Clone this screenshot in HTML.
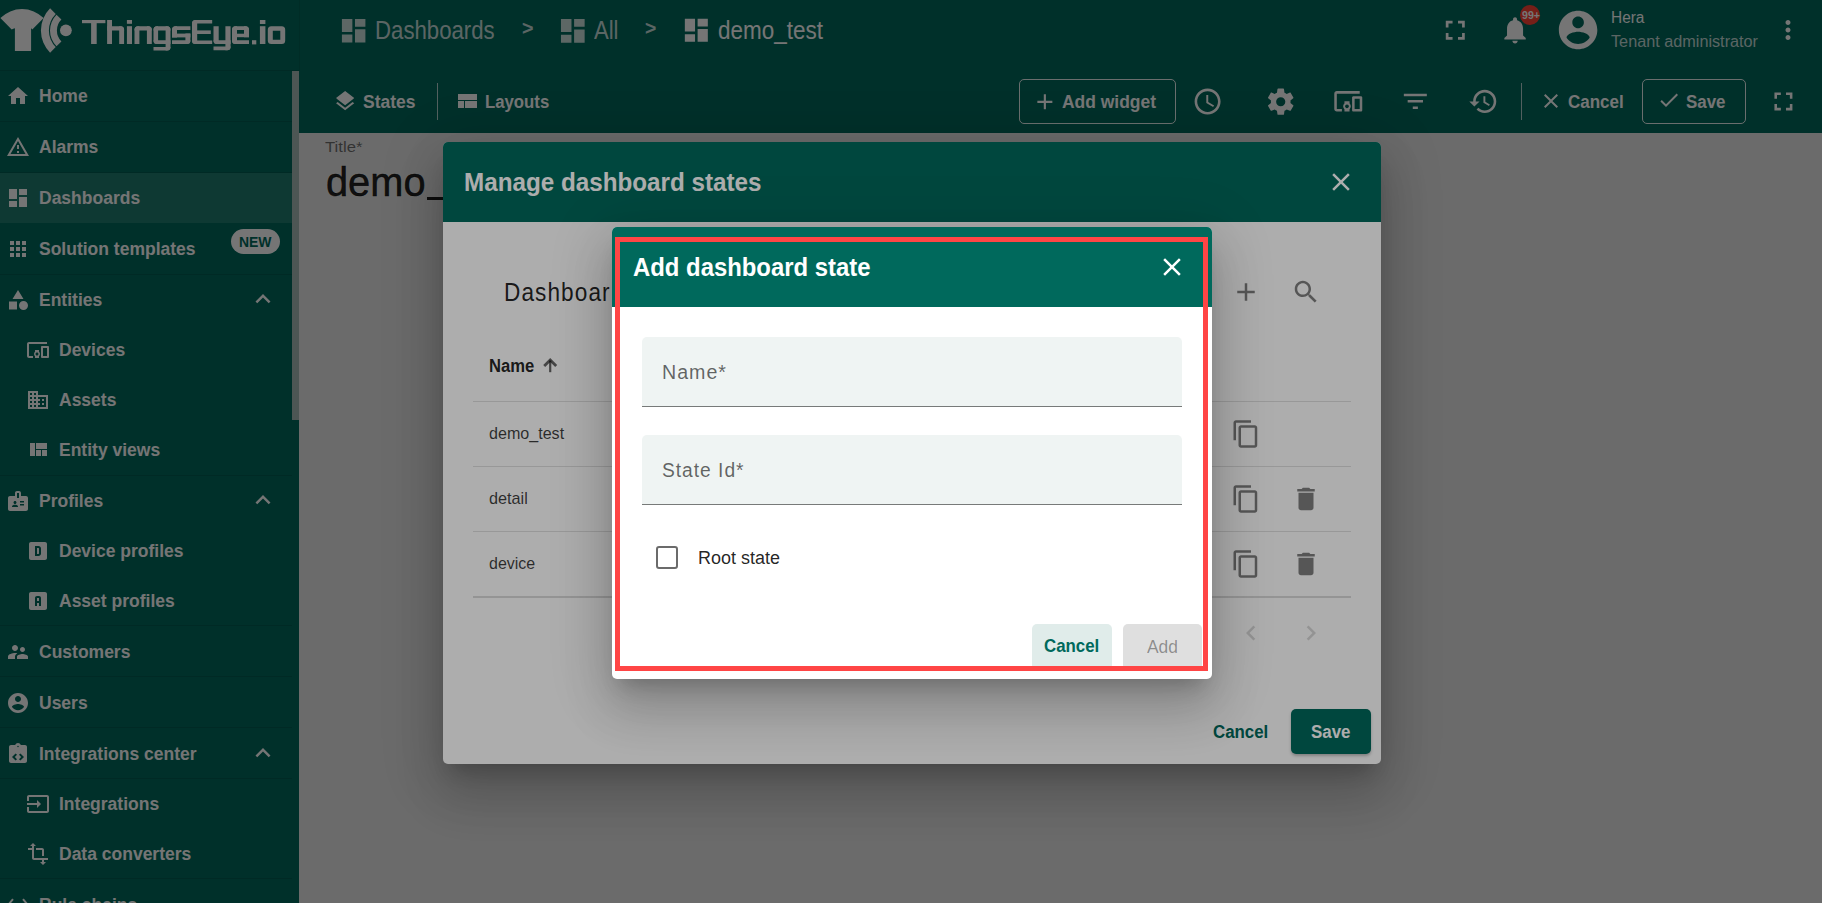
<!DOCTYPE html>
<html><head><meta charset="utf-8"><style>
html,body{margin:0;padding:0}
body{width:1822px;height:903px;overflow:hidden;position:relative;font-family:"Liberation Sans",sans-serif;background:#fafafa}
.layer{position:absolute;left:0;top:0;width:1822px;height:903px;overflow:hidden}
.t{position:absolute;white-space:nowrap;line-height:1.1172;transform-origin:0 0}
.i{position:absolute;overflow:visible}
.r{position:absolute;box-sizing:content-box}
</style></head><body>
<div class="layer" style="z-index:1">
<div class="r" style="left:0px;top:0px;width:1822px;height:133px;background:#00695c"></div>
<div class="r" style="left:0px;top:71px;width:299px;height:832px;background:#00695c"></div>
<div class="r" style="left:0px;top:70px;width:299px;height:1px;background:rgba(0,0,0,0.10)"></div>
<div class="r" style="left:299px;top:0px;width:1px;height:71px;background:rgba(0,0,0,0.08)"></div>
<div class="r" style="left:299px;top:133px;width:1523px;height:770px;background:#e9e9e9"></div>
<svg class="i" style="left:0px;top:0px;width:300px;height:71px" viewBox="0 0 300 71"><g fill="#fff">
<path d="M0.36 18.06A30.6 30.6 0 0 1 43.64 18.06L32.32 29.38A14.6 14.6 0 0 0 31.1 28.28L31.1 50.9L14.9 50.9L14.9 28.28A14.6 14.6 0 0 0 11.68 29.38Z"/>
<path d="M50.1 8.3A31.4 31.4 0 0 0 50.1 52.7L55.75 47.05A23.4 23.4 0 0 1 55.75 13.95Z"/>
<path d="M56.53 14.73A22.3 22.3 0 0 0 56.53 46.27L61.41 41.39A15.4 15.4 0 0 1 61.41 19.61Z"/>
<circle cx="65.9" cy="30.3" r="5.9"/>
<path d="M82.00 20.00H105.40V23.20H82.00V20.00Z"/><path d="M91.10 20.00H96.70V44.00H91.10V20.00Z"/><path d="M107.10 20.00H112.00V44.00H107.10V20.00Z"/><path d="M107.10 26.20H120.60A3.5 3.5 0 0 1 124.10 29.70V30.40H107.10V26.20Z"/><path d="M119.20 26.20H120.60A3.5 3.5 0 0 1 124.10 29.70V44.00H119.20V26.20Z"/><path d="M126.90 20.00H132.00V23.80H126.90V20.00Z"/><path d="M126.90 26.20H132.00V44.00H126.90V26.20Z"/><path d="M138.00 26.20H148.30A3.5 3.5 0 0 1 151.80 29.70V30.40H134.50V29.70A3.5 3.5 0 0 1 138.00 26.20Z"/><path d="M138.00 26.20H139.40V44.00H134.50V29.70A3.5 3.5 0 0 1 138.00 26.20Z"/><path d="M146.90 26.20H148.30A3.5 3.5 0 0 1 151.80 29.70V44.00H146.90V26.20Z"/><path d="M157.00 26.20H167.00A3.5 3.5 0 0 1 170.50 29.70V30.40H153.50V29.70A3.5 3.5 0 0 1 157.00 26.20Z"/><path d="M157.00 26.20H158.10V44.00H157.00A3.5 3.5 0 0 1 153.50 40.50V29.70A3.5 3.5 0 0 1 157.00 26.20Z"/><path d="M165.60 26.20H167.00A3.5 3.5 0 0 1 170.50 29.70V47.10A3.5 3.5 0 0 1 167.00 50.60H165.60V26.20Z"/><path d="M153.50 40.20H170.50V44.00H157.00A3.5 3.5 0 0 1 153.50 40.50V40.20Z"/><path d="M153.50 47.00H170.50V47.10A3.5 3.5 0 0 1 167.00 50.60H153.50V47.00Z"/><path d="M175.50 26.20H190.40V30.00H172.00V29.70A3.5 3.5 0 0 1 175.50 26.20Z"/><path d="M175.50 26.20H177.00V37.40H172.00V29.70A3.5 3.5 0 0 1 175.50 26.20Z"/><path d="M172.00 33.60H190.40V37.40H172.00V33.60Z"/><path d="M185.40 33.60H190.40V40.50A3.5 3.5 0 0 1 186.90 44.00H185.40V33.60Z"/><path d="M172.00 40.20H190.40V40.50A3.5 3.5 0 0 1 186.90 44.00H172.00V40.20Z"/><path d="M195.50 20.00H197.20V44.00H195.50A3.5 3.5 0 0 1 192.00 40.50V23.50A3.5 3.5 0 0 1 195.50 20.00Z"/><path d="M195.50 20.00H212.20V23.60H192.00V23.50A3.5 3.5 0 0 1 195.50 20.00Z"/><path d="M192.00 30.40H210.80V34.00H192.00V30.40Z"/><path d="M192.00 40.40H212.20V44.00H195.50A3.5 3.5 0 0 1 192.00 40.50V40.40Z"/><path d="M213.50 26.20H218.70V44.00H217.00A3.5 3.5 0 0 1 213.50 40.50V26.20Z"/><path d="M213.50 40.20H230.60V44.00H217.00A3.5 3.5 0 0 1 213.50 40.50V40.20Z"/><path d="M225.40 26.20H230.60V46.70A3.5 3.5 0 0 1 227.10 50.20H225.40V26.20Z"/><path d="M213.50 46.60H230.60V46.70A3.5 3.5 0 0 1 227.10 50.20H213.50V46.60Z"/><path d="M235.50 26.20H245.50A3.5 3.5 0 0 1 249.00 29.70V30.00H232.00V29.70A3.5 3.5 0 0 1 235.50 26.20Z"/><path d="M235.50 26.20H237.00V44.00H235.50A3.5 3.5 0 0 1 232.00 40.50V29.70A3.5 3.5 0 0 1 235.50 26.20Z"/><path d="M244.00 26.20H245.50A3.5 3.5 0 0 1 249.00 29.70V37.20H244.00V26.20Z"/><path d="M232.00 33.70H249.00V37.20H232.00V33.70Z"/><path d="M232.00 40.20H249.00V44.00H235.50A3.5 3.5 0 0 1 232.00 40.50V40.20Z"/><path d="M252.00 40.20H256.30V44.40H252.00V40.20Z"/><path d="M259.90 20.00H265.40V24.00H259.90V20.00Z"/><path d="M259.90 26.20H265.40V44.00H259.90V26.20Z"/><path fill-rule="evenodd" d="M271.30 26.20H281.70A3.5 3.5 0 0 1 285.20 29.70V40.50A3.5 3.5 0 0 1 281.70 44.00H271.30A3.5 3.5 0 0 1 267.80 40.50V29.70A3.5 3.5 0 0 1 271.30 26.20ZM272.8 30.8V39.7H280.3V30.8Z"/></g></svg>
<svg class="i" style="left:337.58px;top:14.78px;width:31.333333333333332px;height:31.333333333333332px;" viewBox="0 0 24 24"><path fill="rgba(255,255,255,0.80)" d="M3 13h8V3H3v10zm0 8h8v-6H3v6zm10 0h8V11h-8v10zm0-18v6h8V3h-8z"/></svg>
<div class="t" style="left:375.30px;top:17.38px;font-size:25px;color:rgba(255,255,255,0.80);transform:scaleX(0.8879);">Dashboards</div>
<div class="t" style="left:521.50px;top:17.40px;font-size:20px;color:rgba(255,255,255,0.80);font-weight:bold;transform:scaleX(0.9846);">&gt;</div>
<svg class="i" style="left:557.05px;top:14.75px;width:31.599999999999998px;height:31.599999999999998px;" viewBox="0 0 24 24"><path fill="rgba(255,255,255,0.80)" d="M3 13h8V3H3v10zm0 8h8v-6H3v6zm10 0h8V11h-8v10zm0-18v6h8V3h-8z"/></svg>
<div class="t" style="left:593.50px;top:17.38px;font-size:25px;color:rgba(255,255,255,0.80);transform:scaleX(0.8818);">All</div>
<div class="t" style="left:645.20px;top:17.40px;font-size:20px;color:rgba(255,255,255,0.80);font-weight:bold;transform:scaleX(0.9675);">&gt;</div>
<svg class="i" style="left:681.17px;top:15.07px;width:30.666666666666668px;height:30.666666666666668px;" viewBox="0 0 24 24"><path fill="#ffffff" d="M3 13h8V3H3v10zm0 8h8v-6H3v6zm10 0h8V11h-8v10zm0-18v6h8V3h-8z"/></svg>
<div class="t" style="left:718.00px;top:17.17px;font-size:25px;color:#ffffff;transform:scaleX(0.8994);">demo_test</div>
<svg class="i" style="left:1439.21px;top:14.21px;width:32.57142857142857px;height:32.57142857142857px;" viewBox="0 0 24 24"><path fill="#ffffff" d="M7 14H5v5h5v-2H7v-3zm-2-4h2V7h3V5H5v5zm12 7h-3v2h5v-5h-2v3zM14 5v2h3v3h2V5h-5z"/></svg>
<svg class="i" style="left:1499.25px;top:14.26px;width:32.099999999999994px;height:32.099999999999994px;" viewBox="0 0 24 24"><path fill="#ffffff" d="M12 22c1.1 0 2-.9 2-2h-4c0 1.1.89 2 2 2zm6-6v-5c0-3.07-1.64-5.64-4.5-6.32V4c0-.83-.67-1.5-1.5-1.5s-1.5.67-1.5 1.5v.68C7.63 5.36 6 7.92 6 11v5l-2 2v1h16v-1l-2-2z"/></svg>
<div class="r" style="left:1520px;top:5px;width:20px;height:20px;border-radius:50%;background:#ff4436"></div>
<div class="t" style="left:1521.50px;top:8.74px;font-size:11px;color:#ffffff;font-weight:bold;transform:scaleX(0.9647);">99+</div>
<svg class="i" style="left:1555.15px;top:7.15px;width:46.2px;height:46.2px;" viewBox="0 0 24 24"><path fill="#ffffff" d="M12 2C6.48 2 2 6.48 2 12s4.48 10 10 10 10-4.48 10-10S17.52 2 12 2zm0 3c1.66 0 3 1.34 3 3s-1.34 3-3 3-3-1.34-3-3 1.34-3 3-3zm0 14.2c-2.5 0-4.71-1.28-6-3.22.03-1.99 4-3.08 6-3.08 1.99 0 5.970 1.09 6 3.08-1.29 1.94-3.5 3.22-6 3.22z"/></svg>
<div class="t" style="left:1610.60px;top:8.52px;font-size:16px;color:#ffffff;transform:scaleX(0.9631);">Hera</div>
<div class="t" style="left:1610.50px;top:32.52px;font-size:16px;color:rgba(255,255,255,0.78);transform:scaleX(1.0140);">Tenant administrator</div>
<svg class="i" style="left:1772.50px;top:15.00px;width:30px;height:30px;" viewBox="0 0 24 24"><path fill="#ffffff" d="M12 8c1.1 0 2-.9 2-2s-.9-2-2-2-2 .9-2 2 .9 2 2 2zm0 2c-1.1 0-2 .9-2 2s.9 2 2 2 2-.9 2-2-.9-2-2-2zm0 6c-1.1 0-2 .9-2 2s.9 2 2 2 2-.9 2-2-.9-2-2-2z"/></svg>
<svg class="i" style="left:332.77px;top:88.78px;width:24.266666666666666px;height:24.266666666666666px;" viewBox="0 0 24 24"><path fill="#ffffff" d="M11.99 18.54l-7.37-5.73L3 14.07l9 7 9-7-1.63-1.27-7.38 5.74zM12 16l7.36-5.73L21 9l-9-7-9 7 1.63 1.27L12 16z"/></svg>
<div class="t" style="left:362.50px;top:92.66px;font-size:17.5px;color:#ffffff;font-weight:bold;transform:scaleX(0.9995);">States</div>
<div class="r" style="left:437px;top:83px;width:1px;height:37px;background:rgba(255,255,255,0.7)"></div>
<svg class="i" style="left:455.00px;top:88.50px;width:24px;height:24px;" viewBox="0 0 24 24"><path fill="#ffffff" d="M3 19h6v-7H3v7zm7 0h12v-7H10v7zM3 5v6h19V5H3z"/></svg>
<div class="t" style="left:484.60px;top:92.66px;font-size:17.5px;color:#ffffff;font-weight:bold;transform:scaleX(0.9568);">Layouts</div>
<div class="r" style="left:1019px;top:79px;width:155px;height:43px;border:1px solid rgba(255,255,255,0.9);border-radius:5px"></div>
<svg class="i" style="left:1031.64px;top:88.64px;width:25.714285714285715px;height:25.714285714285715px;" viewBox="0 0 24 24"><path fill="#ffffff" d="M19 13h-6v6h-2v-6H5v-2h6V5h2v6h6v2z"/></svg>
<div class="t" style="left:1062.00px;top:92.66px;font-size:17.5px;color:#ffffff;font-weight:bold;transform:scaleX(0.9969);">Add widget</div>
<svg class="i" style="left:1192.00px;top:85.90px;width:31.2px;height:31.2px;" viewBox="0 0 24 24"><path fill="#ffffff" d="M11.99 2C6.47 2 2 6.48 2 12s4.47 10 9.99 10C17.52 22 22 17.52 22 12S17.52 2 11.99 2zM12 20c-4.42 0-8-3.58-8-8s3.58-8 8-8 8 3.58 8 8-3.58 8-8 8zm.5-13H11v6l5.25 3.15.75-1.23-4.5-2.67z"/></svg>
<svg class="i" style="left:1264.83px;top:85.58px;width:31.449126413155188px;height:31.449126413155188px;" viewBox="0 0 24 24"><path fill="#ffffff" d="M12 15.5A3.5 3.5 0 0 1 8.5 12 3.5 3.5 0 0 1 12 8.5a3.5 3.5 0 0 1 3.5 3.5 3.5 3.5 0 0 1-3.5 3.5m7.43-2.53c.04-.32.07-.64.07-.97 0-.33-.03-.66-.07-1l2.11-1.63c.19-.15.24-.42.12-.64l-2-3.46c-.12-.22-.39-.31-.61-.22l-2.49 1c-.52-.39-1.06-.73-1.69-.98l-.37-2.65A.506.506 0 0 0 14 2h-4c-.25 0-.46.18-.5.42l-.37 2.65c-.63.25-1.17.59-1.69.98l-2.49-1c-.22-.09-.49 0-.61.22l-2 3.46c-.13.22-.07.49.12.64L4.57 11c-.04.34-.07.67-.07 1 0 .33.03.65.07.97l-2.11 1.66c-.19.15-.25.42-.12.64l2 3.46c.12.22.39.3.61.22l2.49-1.01c.52.4 1.06.74 1.69.99l.37 2.65c.04.24.25.42.5.42h4c.25 0 .46-.18.5-.42l.37-2.65c.63-.26 1.17-.59 1.69-.99l2.49 1.01c.22.08.49 0 .61-.22l2-3.46c.12-.22.07-.49-.12-.64l-2.11-1.66z"/></svg>
<svg class="i" style="left:1332.73px;top:86.21px;width:30.545454545454547px;height:30.545454545454547px;" viewBox="0 0 24 24"><path fill="#ffffff" d="M3 6h18V4H3c-1.1 0-2 .9-2 2v12c0 1.1.9 2 2 2h4v-2H3V6zm10 6H9v1.78c-.61.55-1 1.33-1 2.22s.39 1.67 1 2.22V20h4v-1.78c.61-.55 1-1.34 1-2.22s-.39-1.67-1-2.22V12zm-2 5.5c-.83 0-1.5-.67-1.5-1.5s.67-1.5 1.5-1.5 1.5.67 1.5 1.5-.67 1.5-1.5 1.5zM22 8h-6c-.5 0-1 .5-1 1v10c0 .5.5 1 1 1h6c.5 0 1-.5 1-1V9c0-.5-.5-1-1-1zm-1 10h-4v-8h4v8z"/></svg>
<svg class="i" style="left:1400.17px;top:85.63px;width:30.666666666666668px;height:30.666666666666668px;" viewBox="0 0 24 24"><path fill="#ffffff" d="M10 18h4v-2h-4v2zM3 6v2h18V6H3zm3 7h12v-2H6v2z"/></svg>
<svg class="i" style="left:1467.71px;top:85.74px;width:30.857142857142858px;height:30.857142857142858px;" viewBox="0 0 24 24"><path fill="#ffffff" d="M13 3c-4.97 0-9 4.03-9 9H1l3.89 3.89.07.14L9 12H6c0-3.87 3.13-7 7-7s7 3.13 7 7-3.13 7-7 7c-1.93 0-3.68-.79-4.94-2.06l-1.42 1.42C8.27 19.99 10.51 21 13 21c4.97 0 9-4.03 9-9s-4.03-9-9-9zm-1 5v5l4.28 2.54.72-1.21-3.5-2.08V8H12z"/></svg>
<div class="r" style="left:1521px;top:83px;width:1px;height:37px;background:rgba(255,255,255,0.7)"></div>
<svg class="i" style="left:1538.60px;top:89.00px;width:24px;height:24px;" viewBox="0 0 24 24"><path fill="#ffffff" d="M19 6.41L17.59 5 12 10.59 6.41 5 5 6.41 10.59 12 5 17.59 6.41 19 12 13.41 17.59 19 19 17.59 13.41 12z"/></svg>
<div class="t" style="left:1568.00px;top:92.66px;font-size:17.5px;color:#ffffff;font-weight:bold;transform:scaleX(0.9706);">Cancel</div>
<div class="r" style="left:1642px;top:79px;width:102px;height:43px;border:1px solid rgba(255,255,255,0.9);border-radius:5px"></div>
<svg class="i" style="left:1656.59px;top:88.41px;width:24px;height:24px;" viewBox="0 0 24 24"><path fill="#ffffff" d="M9 16.17L4.83 12l-1.42 1.41L9 19 21 7l-1.41-1.41z"/></svg>
<div class="t" style="left:1686.00px;top:92.66px;font-size:17.5px;color:#ffffff;font-weight:bold;transform:scaleX(0.9664);">Save</div>
<svg class="i" style="left:1767.57px;top:85.57px;width:30.857142857142858px;height:30.857142857142858px;" viewBox="0 0 24 24"><path fill="#ffffff" d="M7 14H5v5h5v-2H7v-3zm-2-4h2V7h3V5H5v5zm12 7h-3v2h5v-5h-2v3zM14 5v2h3v3h2V5h-5z"/></svg>
<div class="r" style="left:0px;top:173px;width:292px;height:50px;background:rgba(255,255,255,0.13)"></div>
<svg class="i" style="left:5.50px;top:83.80px;width:24px;height:24px;" viewBox="0 0 24 24"><path fill="#ffffff" d="M10 20v-6h4v6h5v-8h3L12 3 2 12h3v8z"/></svg>
<div class="t" style="left:39.00px;top:87.06px;font-size:17.5px;color:#ffffff;font-weight:bold;">Home</div>
<svg class="i" style="left:5.50px;top:134.80px;width:24px;height:24px;" viewBox="0 0 24 24"><path fill="#ffffff" d="M12 5.99L19.53 19H4.47L12 5.99M12 2L1 21h22L12 2zm1 14h-2v2h2v-2zm0-6h-2v4h2v-4z"/></svg>
<div class="t" style="left:39.00px;top:138.06px;font-size:17.5px;color:#ffffff;font-weight:bold;">Alarms</div>
<svg class="i" style="left:5.50px;top:185.80px;width:24px;height:24px;" viewBox="0 0 24 24"><path fill="#ffffff" d="M3 13h8V3H3v10zm0 8h8v-6H3v6zm10 0h8V11h-8v10zm0-18v6h8V3h-8z"/></svg>
<div class="t" style="left:39.00px;top:189.06px;font-size:17.5px;color:#ffffff;font-weight:bold;">Dashboards</div>
<svg class="i" style="left:5.50px;top:236.80px;width:24px;height:24px;" viewBox="0 0 24 24"><path fill="#ffffff" d="M4 8h4V4H4v4zm6 12h4v-4h-4v4zm-6 0h4v-4H4v4zm0-6h4v-4H4v4zm6 0h4v-4h-4v4zm6-10v4h4V4h-4zm-6 4h4V4h-4v4zm6 6h4v-4h-4v4zm0 6h4v-4h-4v4z"/></svg>
<div class="t" style="left:39.00px;top:240.06px;font-size:17.5px;color:#ffffff;font-weight:bold;">Solution templates</div>
<svg class="i" style="left:5.50px;top:287.80px;width:24px;height:24px;" viewBox="0 0 24 24"><path fill="#ffffff" d="M12 2l-5.5 9h11zM17.5 13a4.5 4.5 0 1 0 0 9a4.5 4.5 0 1 0 0-9zM3 13.5h8v8H3z"/></svg>
<div class="t" style="left:39.00px;top:291.06px;font-size:17.5px;color:#ffffff;font-weight:bold;">Entities</div>
<svg class="i" style="left:5.50px;top:488.80px;width:24px;height:24px;" viewBox="0 0 24 24"><path fill="#ffffff" d="M20 7h-5V4c0-1.1-.9-2-2-2h-2c-1.1 0-2 .9-2 2v3H4c-1.1 0-2 .9-2 2v11c0 1.1.9 2 2 2h16c1.1 0 2-.9 2-2V9c0-1.1-.9-2-2-2zM9 12c.83 0 1.5.67 1.5 1.5S9.83 15 9 15s-1.5-.67-1.5-1.5S8.17 12 9 12zm3 6H6v-.43c0-.6.36-1.15.92-1.39.64-.28 1.34-.43 2.08-.43s1.44.15 2.08.43c.55.24.92.78.92 1.39V18zm1-9h-2V4h2v5zm5 7.5h-4V15h4v1.5zm0-3h-4V12h4v1.5z"/></svg>
<div class="t" style="left:39.00px;top:492.06px;font-size:17.5px;color:#ffffff;font-weight:bold;">Profiles</div>
<svg class="i" style="left:5.50px;top:639.80px;width:24px;height:24px;" viewBox="0 0 24 24"><path fill="#ffffff" d="M16.5 12c1.38 0 2.49-1.12 2.49-2.5S17.88 7 16.5 7C15.12 7 14 8.12 14 9.5s1.12 2.5 2.5 2.5zM9 11c1.66 0 2.99-1.34 2.99-3S10.66 5 9 5C7.34 5 6 6.34 6 8s1.34 3 3 3zm7.5 3c-1.83 0-5.5.92-5.5 2.75V19h11v-2.25c0-1.83-3.67-2.75-5.5-2.75zM9 13c-2.33 0-7 1.17-7 3.5V19h7v-2.25c0-.85.33-2.34 2.37-3.47C10.5 13.1 9.66 13 9 13z"/></svg>
<div class="t" style="left:39.00px;top:643.06px;font-size:17.5px;color:#ffffff;font-weight:bold;">Customers</div>
<svg class="i" style="left:5.50px;top:690.80px;width:24px;height:24px;" viewBox="0 0 24 24"><path fill="#ffffff" d="M12 2C6.48 2 2 6.48 2 12s4.48 10 10 10 10-4.48 10-10S17.52 2 12 2zm0 3c1.66 0 3 1.34 3 3s-1.34 3-3 3-3-1.34-3-3 1.34-3 3-3zm0 14.2c-2.5 0-4.71-1.28-6-3.22.03-1.99 4-3.08 6-3.08 1.99 0 5.970 1.09 6 3.08-1.29 1.94-3.5 3.22-6 3.22z"/></svg>
<div class="t" style="left:39.00px;top:694.06px;font-size:17.5px;color:#ffffff;font-weight:bold;">Users</div>
<svg class="i" style="left:5.50px;top:741.80px;width:24px;height:24px;" viewBox="0 0 24 24"><path fill="#ffffff" d="M19 3h-4.18C14.4 1.84 13.3 1 12 1s-2.4.84-2.82 2H5c-1.1 0-2 .9-2 2v14c0 1.1.9 2 2 2h14c1.1 0 2-.9 2-2V5c0-1.1-.9-2-2-2zm-8 14.17l-1.41 1.42L6 15l3.59-3.59L11 12.83 8.83 15 11 17.17zm1-11.92c-.41 0-.75-.34-.75-.75s.34-.75.75-.75.75.34.75.75-.34.75-.75.75zm2.41 13.34L13 17.17 15.17 15 13 12.83l1.41-1.42L18 15l-3.59 3.59z"/></svg>
<div class="t" style="left:39.00px;top:745.06px;font-size:17.5px;color:#ffffff;font-weight:bold;">Integrations center</div>
<svg class="i" style="left:5.50px;top:892.50px;width:24px;height:24px;" viewBox="0 0 24 24"><path fill="#ffffff" d="M7.77 6.76L6.23 5.48.82 12l5.41 6.52 1.54-1.28L3.42 12l4.35-5.24zM7 13h2v-2H7v2zm10-2h-2v2h2v-2zm-6 2h2v-2h-2v2zm6.77-7.52l-1.54 1.28L20.58 12l-4.35 5.24 1.54 1.28L23.18 12l-5.41-6.52z"/></svg>
<div class="t" style="left:39.00px;top:895.76px;font-size:17.5px;color:#ffffff;font-weight:bold;">Rule chains</div>
<svg class="i" style="left:248.40px;top:284.30px;width:30px;height:30px;" viewBox="0 0 24 24"><path fill="#ffffff" d="M12 8l-6 6 1.41 1.41L12 10.83l4.59 4.58L18 14z"/></svg>
<svg class="i" style="left:248.40px;top:485.30px;width:30px;height:30px;" viewBox="0 0 24 24"><path fill="#ffffff" d="M12 8l-6 6 1.41 1.41L12 10.83l4.59 4.58L18 14z"/></svg>
<svg class="i" style="left:248.40px;top:738.30px;width:30px;height:30px;" viewBox="0 0 24 24"><path fill="#ffffff" d="M12 8l-6 6 1.41 1.41L12 10.83l4.59 4.58L18 14z"/></svg>
<svg class="i" style="left:25.50px;top:337.80px;width:24px;height:24px;" viewBox="0 0 24 24"><path fill="#ffffff" d="M3 6h18V4H3c-1.1 0-2 .9-2 2v12c0 1.1.9 2 2 2h4v-2H3V6zm10 6H9v1.78c-.61.55-1 1.33-1 2.22s.39 1.67 1 2.22V20h4v-1.78c.61-.55 1-1.34 1-2.22s-.39-1.67-1-2.22V12zm-2 5.5c-.83 0-1.5-.67-1.5-1.5s.67-1.5 1.5-1.5 1.5.67 1.5 1.5-.67 1.5-1.5 1.5zM22 8h-6c-.5 0-1 .5-1 1v10c0 .5.5 1 1 1h6c.5 0 1-.5 1-1V9c0-.5-.5-1-1-1zm-1 10h-4v-8h4v8z"/></svg>
<div class="t" style="left:59.00px;top:341.06px;font-size:17.5px;color:#ffffff;font-weight:bold;">Devices</div>
<svg class="i" style="left:25.50px;top:387.80px;width:24px;height:24px;" viewBox="0 0 24 24"><path fill="#ffffff" d="M12 7V3H2v18h20V7H12zM6 19H4v-2h2v2zm0-4H4v-2h2v2zm0-4H4V9h2v2zm0-4H4V5h2v2zm4 12H8v-2h2v2zm0-4H8v-2h2v2zm0-4H8V9h2v2zm0-4H8V5h2v2zm10 12h-8v-2h2v-2h-2v-2h2v-2h-2V9h8v10zm-2-8h-2v2h2v-2zm0 4h-2v2h2v-2z"/></svg>
<div class="t" style="left:59.00px;top:391.06px;font-size:17.5px;color:#ffffff;font-weight:bold;">Assets</div>
<svg class="i" style="left:25.50px;top:437.80px;width:24px;height:24px;" viewBox="0 0 24 24"><path fill="#ffffff" d="M10 18h5v-6h-5v6zm-6 0h5V5H4v13zm12 0h5v-6h-5v6zM10 5v6h11V5H10z"/></svg>
<div class="t" style="left:59.00px;top:441.06px;font-size:17.5px;color:#ffffff;font-weight:bold;">Entity views</div>
<svg class="i" style="left:25.50px;top:538.80px;width:24px;height:24px;" viewBox="0 0 24 24"><path fill="#ffffff" d="M5 3h14c1.1 0 2 .9 2 2v14c0 1.1-.9 2-2 2H5c-1.1 0-2-.9-2-2V5c0-1.1.9-2 2-2zm4 4v10h3.5c1.4 0 2.5-1.1 2.5-2.5v-5C15 8.1 13.9 7 12.5 7H9zm2 2h1.5c.3 0 .5.2.5.5v5c0 .3-.2.5-.5.5H11V9z"/></svg>
<div class="t" style="left:59.00px;top:542.06px;font-size:17.5px;color:#ffffff;font-weight:bold;">Device profiles</div>
<svg class="i" style="left:25.50px;top:588.80px;width:24px;height:24px;" viewBox="0 0 24 24"><path fill="#ffffff" d="M5 3h14c1.1 0 2 .9 2 2v14c0 1.1-.9 2-2 2H5c-1.1 0-2-.9-2-2V5c0-1.1.9-2 2-2zm6 4c-1.1 0-2 .9-2 2v8h2v-3h2v3h2V9c0-1.1-.9-2-2-2h-2zm0 2h2v3h-2V9z"/></svg>
<div class="t" style="left:59.00px;top:592.06px;font-size:17.5px;color:#ffffff;font-weight:bold;">Asset profiles</div>
<svg class="i" style="left:25.50px;top:791.80px;width:24px;height:24px;" viewBox="0 0 24 24"><path fill="#ffffff" d="M21 3.01H3c-1.1 0-2 .9-2 2V9h2V4.99h18v14.03H3V15H1v4.01c0 1.1.9 1.98 2 1.98h18c1.1 0 2-.88 2-1.98v-14c0-1.11-.9-2-2-2zM11 16l4-4-4-4v3H1v2h10v3z"/></svg>
<div class="t" style="left:59.00px;top:795.06px;font-size:17.5px;color:#ffffff;font-weight:bold;">Integrations</div>
<svg class="i" style="left:25.50px;top:841.80px;width:24px;height:24px;" viewBox="0 0 24 24"><path fill="#ffffff" d="M22 18v-2H8V4h2L7 1 4 4h2v2H2v2h4v8c0 1.1.9 2 2 2h8v2h-2l3 3 3-3h-2v-2h4zM10 8h6v6h2V8c0-1.1-.9-2-2-2h-6v2z"/></svg>
<div class="t" style="left:59.00px;top:845.06px;font-size:17.5px;color:#ffffff;font-weight:bold;">Data converters</div>
<div class="r" style="left:230.5px;top:229.4px;width:49px;height:25px;border-radius:13px;background:#fff"></div>
<div class="t" style="left:238.50px;top:234.12px;font-size:15px;color:#00695c;font-weight:bold;transform:scaleX(0.9287);">NEW</div>
<div class="r" style="left:0px;top:121px;width:292px;height:1px;background:rgba(0,0,0,0.10)"></div>
<div class="r" style="left:0px;top:172px;width:292px;height:1px;background:rgba(0,0,0,0.10)"></div>
<div class="r" style="left:0px;top:274px;width:292px;height:1px;background:rgba(0,0,0,0.10)"></div>
<div class="r" style="left:0px;top:475px;width:292px;height:1px;background:rgba(0,0,0,0.10)"></div>
<div class="r" style="left:0px;top:625px;width:292px;height:1px;background:rgba(0,0,0,0.10)"></div>
<div class="r" style="left:0px;top:676px;width:292px;height:1px;background:rgba(0,0,0,0.10)"></div>
<div class="r" style="left:0px;top:727px;width:292px;height:1px;background:rgba(0,0,0,0.10)"></div>
<div class="r" style="left:0px;top:778px;width:292px;height:1px;background:rgba(0,0,0,0.10)"></div>
<div class="r" style="left:0px;top:878px;width:292px;height:1px;background:rgba(0,0,0,0.10)"></div>
<div class="r" style="left:292px;top:71px;width:7px;height:349px;background:#a8bbb7"></div>
<div class="t" style="left:324.50px;top:138.73px;font-size:15px;color:rgba(0,0,0,0.55);transform:scaleX(1.1154);">Title*</div>
<div class="t" style="left:325.50px;top:159.80px;font-size:40px;color:rgba(0,0,0,0.87);transform:scaleX(0.9944);-webkit-text-stroke:0.5px rgba(0,0,0,0.87);">demo</div>
<div class="r" style="left:427px;top:196.5px;width:20px;height:3px;background:rgba(0,0,0,0.87)"></div>
</div>
<div class="layer" style="z-index:2;background:rgba(0,0,0,0.32)"></div>
<div class="layer" style="z-index:3">
<div class="r" style="left:443px;top:142px;width:938px;height:622px;background:#fff;border-radius:5px;box-shadow:0 14px 19px -9px rgba(0,0,0,.2),0 30px 48px 4px rgba(0,0,0,.14),0 11px 58px 10px rgba(0,0,0,.12);overflow:hidden"><div style="position:absolute;left:0;top:0;width:938px;height:80px;background:#00695c"></div></div>
<div class="t" style="left:463.50px;top:168.97px;font-size:25px;color:#ffffff;font-weight:bold;transform:scaleX(0.9689);">Manage dashboard states</div>
<svg class="i" style="left:1326.00px;top:167.00px;width:30px;height:30px;" viewBox="0 0 24 24"><path fill="#ffffff" d="M19 6.41L17.59 5 12 10.59 6.41 5 5 6.41 10.59 12 5 17.59 6.41 19 12 13.41 17.59 19 19 17.59 13.41 12z"/></svg>
<div class="t" style="left:504.30px;top:279.18px;font-size:25px;color:rgba(0,0,0,0.87);letter-spacing:1.2px;transform:scaleX(0.9042);">Dashboar</div>
<svg class="i" style="left:1231.00px;top:277.00px;width:30px;height:30px;" viewBox="0 0 24 24"><path fill="rgba(0,0,0,0.5)" d="M19 13h-6v6h-2v-6H5v-2h6V5h2v6h6v2z"/></svg>
<svg class="i" style="left:1290.75px;top:277.25px;width:30px;height:30px;" viewBox="0 0 24 24"><path fill="rgba(0,0,0,0.5)" d="M15.5 14h-.79l-.28-.27C15.41 12.59 16 11.11 16 9.5 16 5.91 13.09 3 9.5 3S3 5.91 3 9.5 5.91 16 9.5 16c1.61 0 3.09-.59 4.23-1.57l.27.28v.79l5 4.99L20.49 19l-4.99-5zm-6 0C7.01 14 5 11.99 5 9.5S7.01 5 9.5 5 14 7.01 14 9.5 11.99 14 9.5 14z"/></svg>
<div class="t" style="left:489.20px;top:356.66px;font-size:17.5px;color:rgba(0,0,0,0.87);font-weight:bold;transform:scaleX(0.9504);">Name</div>
<svg class="i" style="left:0;top:0;width:1822px;height:903px" viewBox="0 0 1822 903"><g stroke="rgba(0,0,0,0.6)" fill="none"><polyline points="544.2,366 550.2,360 556.2,366" stroke-width="2.8"/><line x1="550.2" y1="360.5" x2="550.2" y2="372.2" stroke-width="2.2"/></g></svg>
<div class="r" style="left:473px;top:401px;width:878px;height:1px;background:rgba(0,0,0,0.12)"></div>
<div class="r" style="left:473px;top:466px;width:878px;height:1px;background:rgba(0,0,0,0.12)"></div>
<div class="r" style="left:473px;top:531px;width:878px;height:1px;background:rgba(0,0,0,0.12)"></div>
<div class="r" style="left:473px;top:596px;width:878px;height:2px;background:rgba(0,0,0,0.14)"></div>
<div class="t" style="left:488.50px;top:423.92px;font-size:17px;color:rgba(0,0,0,0.76);transform:scaleX(0.9461);">demo_test</div>
<svg class="i" style="left:1230.50px;top:419.35px;width:30px;height:30px;" viewBox="0 0 24 24"><path fill="rgba(0,0,0,0.5)" d="M16 1H4c-1.1 0-2 .9-2 2v14h2V3h12V1zm3 4H8c-1.1 0-2 .9-2 2v14c0 1.1.9 2 2 2h11c1.1 0 2-.9 2-2V7c0-1.1-.9-2-2-2zm0 16H8V7h11v14z"/></svg>
<div class="t" style="left:488.50px;top:488.92px;font-size:17px;color:rgba(0,0,0,0.76);transform:scaleX(0.9547);">detail</div>
<svg class="i" style="left:1230.50px;top:484.35px;width:30px;height:30px;" viewBox="0 0 24 24"><path fill="rgba(0,0,0,0.5)" d="M16 1H4c-1.1 0-2 .9-2 2v14h2V3h12V1zm3 4H8c-1.1 0-2 .9-2 2v14c0 1.1.9 2 2 2h11c1.1 0 2-.9 2-2V7c0-1.1-.9-2-2-2zm0 16H8V7h11v14z"/></svg>
<svg class="i" style="left:1290.75px;top:484.25px;width:30px;height:30px;" viewBox="0 0 24 24"><path fill="rgba(0,0,0,0.5)" d="M6 19c0 1.1.9 2 2 2h8c1.1 0 2-.9 2-2V7H6v12zM19 4h-3.5l-1-1h-5l-1 1H5v2h14V4z"/></svg>
<div class="t" style="left:488.50px;top:553.91px;font-size:17px;color:rgba(0,0,0,0.76);transform:scaleX(0.9401);">device</div>
<svg class="i" style="left:1230.50px;top:549.35px;width:30px;height:30px;" viewBox="0 0 24 24"><path fill="rgba(0,0,0,0.5)" d="M16 1H4c-1.1 0-2 .9-2 2v14h2V3h12V1zm3 4H8c-1.1 0-2 .9-2 2v14c0 1.1.9 2 2 2h11c1.1 0 2-.9 2-2V7c0-1.1-.9-2-2-2zm0 16H8V7h11v14z"/></svg>
<svg class="i" style="left:1290.75px;top:549.25px;width:30px;height:30px;" viewBox="0 0 24 24"><path fill="rgba(0,0,0,0.5)" d="M6 19c0 1.1.9 2 2 2h8c1.1 0 2-.9 2-2V7H6v12zM19 4h-3.5l-1-1h-5l-1 1H5v2h14V4z"/></svg>
<svg class="i" style="left:1236.00px;top:617.50px;width:30px;height:30px;" viewBox="0 0 24 24"><path fill="rgba(0,0,0,0.15)" d="M15.41 7.41L14 6l-6 6 6 6 1.41-1.41L10.83 12z"/></svg>
<svg class="i" style="left:1296.36px;top:617.50px;width:30px;height:30px;" viewBox="0 0 24 24"><path fill="rgba(0,0,0,0.15)" d="M10 6L8.59 7.41 13.17 12l-4.58 4.59L10 18l6-6z"/></svg>
<div class="t" style="left:1213.00px;top:721.71px;font-size:18px;color:#00695c;font-weight:bold;transform:scaleX(0.9368);">Cancel</div>
<div class="r" style="left:1291px;top:709px;width:80px;height:45px;border-radius:5px;background:#00695c;box-shadow:0 2px 3px rgba(0,0,0,.25)"></div>
<div class="t" style="left:1311.00px;top:721.71px;font-size:18px;color:#ffffff;font-weight:bold;transform:scaleX(0.9396);">Save</div>
</div>
<div class="layer" style="z-index:4;background:rgba(0,0,0,0.32)"></div>
<div class="layer" style="z-index:5">
<div class="r" style="left:612px;top:227px;width:600px;height:452px;background:#fff;border-radius:5px;box-shadow:0 14px 19px -9px rgba(0,0,0,.2),0 30px 48px 4px rgba(0,0,0,.14),0 11px 58px 10px rgba(0,0,0,.12);overflow:hidden"><div style="position:absolute;left:0;top:0;width:600px;height:80px;background:#00695c"></div></div>
<div class="t" style="left:632.70px;top:253.57px;font-size:25px;color:#ffffff;font-weight:bold;transform:scaleX(0.9551);">Add dashboard state</div>
<svg class="i" style="left:1157.00px;top:252.00px;width:30px;height:30px;" viewBox="0 0 24 24"><path fill="#ffffff" d="M19 6.41L17.59 5 12 10.59 6.41 5 5 6.41 10.59 12 5 17.59 6.41 19 12 13.41 17.59 19 19 17.59 13.41 12z"/></svg>
<div class="r" style="left:642px;top:337px;width:540px;height:69px;background:#eff4f3;border-radius:5px 5px 0 0;border-bottom:1px solid rgba(0,0,0,0.5)"></div>
<div class="t" style="left:662.00px;top:360.70px;font-size:20px;color:rgba(0,0,0,0.6);letter-spacing:1.0px;transform:scaleX(0.9828);">Name*</div>
<div class="r" style="left:642px;top:435px;width:540px;height:69px;background:#eff4f3;border-radius:5px 5px 0 0;border-bottom:1px solid rgba(0,0,0,0.5)"></div>
<div class="t" style="left:662.00px;top:459.20px;font-size:20px;color:rgba(0,0,0,0.6);letter-spacing:1.0px;transform:scaleX(0.9624);">State Id*</div>
<div class="r" style="left:655.8px;top:546px;width:18px;height:18.6px;border:2px solid rgba(0,0,0,0.58);border-radius:3px"></div>
<div class="t" style="left:697.80px;top:547.71px;font-size:18px;color:rgba(0,0,0,0.87);transform:scaleX(0.9982);">Root state</div>
<div class="r" style="left:1032px;top:624px;width:80px;height:46px;border-radius:5px;background:#e0ecea"></div>
<div class="t" style="left:1044.00px;top:636.26px;font-size:18.5px;color:#00695c;font-weight:bold;transform:scaleX(0.9115);">Cancel</div>
<div class="r" style="left:1122.5px;top:624px;width:79.5px;height:46px;border-radius:5px;background:#dfdfdf"></div>
<div class="t" style="left:1147.00px;top:637.26px;font-size:18.5px;color:rgba(0,0,0,0.38);transform:scaleX(0.9417);">Add</div>
</div>
<div class="layer" style="z-index:6">
<div class="r" style="left:615px;top:237px;width:583.4px;height:424.3px;border:5px solid #ff4545"></div>
</div>
</body></html>
